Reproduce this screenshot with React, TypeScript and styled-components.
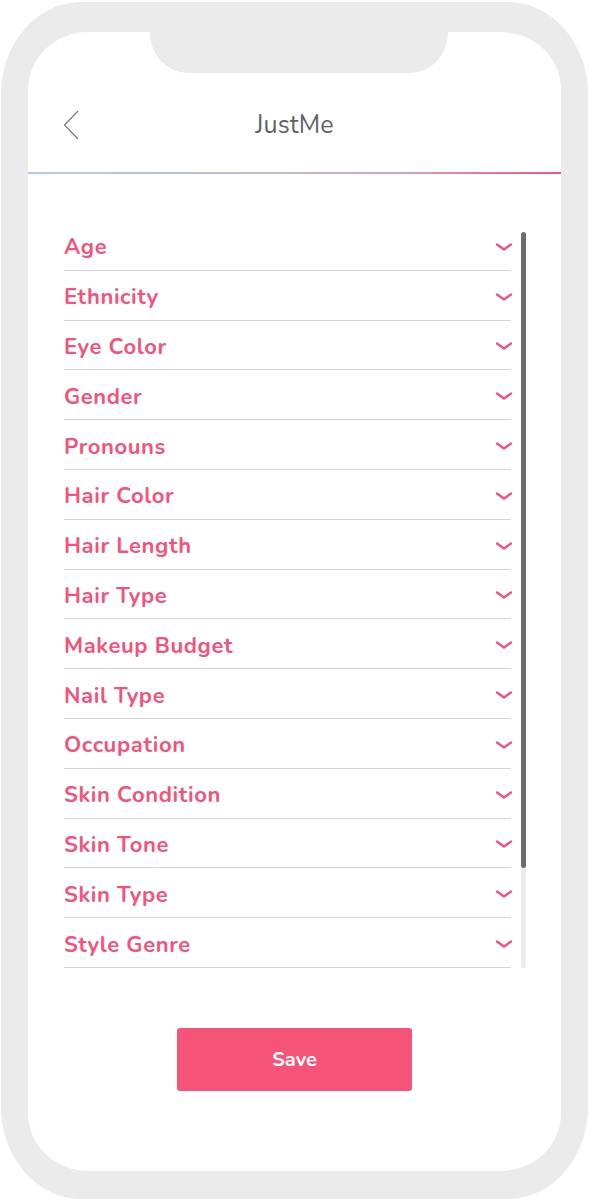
import React from "react";
import styled, { createGlobalStyle } from "styled-components";

const GlobalStyle = createGlobalStyle`
  html, body {
    margin: 0;
    padding: 0;
    background: #ffffff;
  }
  body {
    font-family: "Nunito", "Lato", "Open Sans", sans-serif;
  }
  * { box-sizing: border-box; }
`;

const Phone = styled.div`
  margin: 2px 1px 0 1px;
  width: 587px;
  height: 1197px;
  background: #ebebeb;
  border-radius: 80px / 92px;
  padding: 30px 27px 28px 27px;
`;

const Screen = styled.div`
  position: relative;
  height: 100%;
  background: #ffffff;
  border-radius: 60px / 58px;
  display: flex;
  flex-direction: column;
  overflow: hidden;
`;

const Notch = styled.div`
  position: absolute;
  top: 0;
  left: 122px;
  width: 298px;
  height: 41px;
  background: #ebebeb;
  border-radius: 0 0 38px 38px / 0 0 40px 40px;
`;

const Header = styled.header`
  display: flex;
  align-items: center;
  justify-content: center;
  position: relative;
  height: 40px;
  margin-top: 73px;
  margin-bottom: 27px;
`;

const BackButton = styled.button`
  position: absolute;
  left: 35px;
  top: 5px;
  width: 16px;
  height: 30px;
  padding: 0;
  border: 0;
  background: transparent;
  display: flex;
`;

const Title = styled.h1`
  margin: 0;
  font-size: 25px;
  font-weight: 400;
  color: #5e6166;
  letter-spacing: 0.2px;
`;

const Divider = styled.div`
  height: 2px;
  background: linear-gradient(to right, #b2cbea 0%, #bdbcdc 45%, #d3a2c0 70%, #f5537a 100%);
`;

const ListArea = styled.div`
  display: flex;
  margin: 47px 35px 0 36px;
  gap: 10px;
`;

const List = styled.ul`
  list-style: none;
  margin: 0;
  padding: 0;
  flex: 1;
`;

const Row = styled.li`
  height: 49.8px;
  display: flex;
  align-items: center;
  justify-content: space-between;
  border-bottom: 1.5px solid #d4d4d4;
  padding-top: 4px;
`;

const Label = styled.span`
  font-size: 22px;
  font-weight: 700;
  color: #f4527a;
  letter-spacing: 0.6px;
`;

const Chevron = styled.svg`
  width: 16px;
  height: 8px;
  margin-right: -1px;
  margin-top: -1px;
`;

const Track = styled.div`
  margin-top: 11px;
  width: 5px;
  height: 736px;
  border-radius: 3px;
  background: #ececec;
  display: flex;
  flex-direction: column;
`;

const Thumb = styled.div`
  height: 636px;
  border-radius: 3px;
  background: #6c6d70;
`;

const Footer = styled.div`
  display: flex;
  justify-content: center;
  margin-top: 60px;
`;

const SaveButton = styled.button`
  width: 235px;
  height: 63px;
  border: 0;
  border-radius: 3px;
  background: #f55478;
  color: #ffffff;
  font-family: "Nunito", "Lato", "Open Sans", sans-serif;
  font-size: 20px;
  font-weight: 700;
  cursor: pointer;
`;

const items = [
  "Age",
  "Ethnicity",
  "Eye Color",
  "Gender",
  "Pronouns",
  "Hair Color",
  "Hair Length",
  "Hair Type",
  "Makeup Budget",
  "Nail Type",
  "Occupation",
  "Skin Condition",
  "Skin Tone",
  "Skin Type",
  "Style Genre",
];

export default function App() {
  return (
    <>
      <GlobalStyle />
      <Phone>
        <Screen>
          <Notch />
          <Header>
            <BackButton aria-label="Back">
              <svg width="16" height="30" viewBox="0 0 16 30" fill="none">
                <polyline points="15,1 1.5,15 15,29" stroke="#7a7a7a" strokeWidth="1.2" />
              </svg>
            </BackButton>
            <Title>JustMe</Title>
          </Header>
          <Divider />
          <ListArea>
            <List>
              {items.map((item) => (
                <Row key={item}>
                  <Label>{item}</Label>
                  <Chevron viewBox="0 0 16 8" fill="none">
                    <polyline points="1,1.5 8,6.5 15,1.5" stroke="#f4527a" strokeWidth="2.4" strokeLinecap="round" strokeLinejoin="round" />
                  </Chevron>
                </Row>
              ))}
            </List>
            <Track>
              <Thumb />
            </Track>
          </ListArea>
          <Footer>
            <SaveButton>Save</SaveButton>
          </Footer>
        </Screen>
      </Phone>
    </>
  );
}
